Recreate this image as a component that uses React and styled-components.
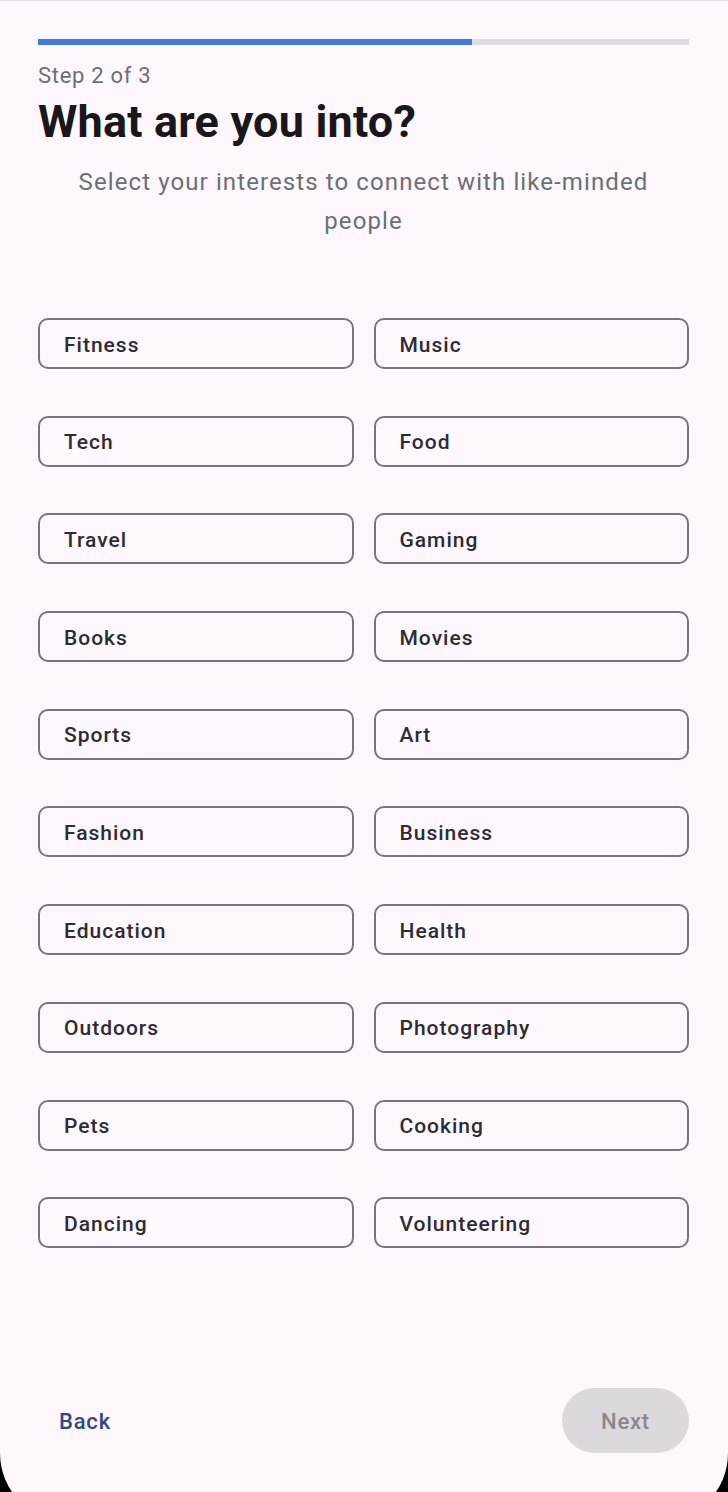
import React from "react";
import styled, { createGlobalStyle } from "styled-components";

const Global = createGlobalStyle`
  html, body { margin: 0; padding: 0; background: #000; overflow: hidden; }
  * { box-sizing: border-box; }
`;

const Screen = styled.div`
  width: 728px;
  height: 1522px;
  background: #fef7fd;
  border-radius: 69px;
  border-top: 1px solid #e3e1ea;
  border-top-left-radius: 0;
  border-top-right-radius: 0;
  overflow: hidden;
  display: flex;
  flex-direction: column;
  padding: 38px 39px 69px 38px;
  font-family: Roboto, "Noto Sans", sans-serif;
`;

const Track = styled.div`
  height: 6px;
  background: #dadbe4;
  display: flex;
`;

const Fill = styled.div`
  height: 100%;
  background: #3e7bdc;
`;

const Step = styled.div`
  margin-top: 18px;
  font-size: 22px;
  line-height: 26px;
  color: #687173;
  letter-spacing: 0.7px;
`;

const Title = styled.h1`
  margin: 6px 0 0;
  font-size: 45px;
  line-height: 54px;
  font-weight: 700;
  color: #18181c;
  letter-spacing: 0.2px;
`;

const Subtitle = styled.p`
  margin: 14px 0 0;
  font-size: 24px;
  line-height: 39px;
  color: #687173;
  text-align: center;
  padding: 0 10px;
  letter-spacing: 1.1px;
`;

const Grid = styled.div`
  margin-top: 77px;
  display: grid;
  grid-template-columns: 1fr 1fr;
  column-gap: 20px;
  row-gap: 46.7px;
`;

const Chip = styled.button`
  height: 51px;
  border: 2px solid #74757e;
  border-radius: 10px;
  background: transparent;
  display: flex;
  align-items: center;
  padding: 2px 0 0 24px;
  font-family: inherit;
  font-size: 21px;
  font-weight: 500;
  color: #2b2d33;
  text-align: left;
  letter-spacing: 1px;
`;

const Footer = styled.div`
  margin-top: auto;
  display: flex;
  justify-content: space-between;
  align-items: center;
`;

const TextButton = styled.button`
  height: 65px;
  padding: 2px 21px 0;
  border: none;
  background: transparent;
  font-family: inherit;
  font-size: 22px;
  font-weight: 500;
  color: #34478a;
  letter-spacing: 0.8px;
`;

const FilledButton = styled.button`
  height: 65px;
  width: 127px;
  padding-top: 2px;
  border: none;
  border-radius: 33px;
  background: #dcd8dd;
  font-family: inherit;
  font-size: 22px;
  font-weight: 500;
  color: #8a8790;
  letter-spacing: 0.8px;
`;

const interests = [
  "Fitness", "Music", "Tech", "Food", "Travel", "Gaming", "Books", "Movies",
  "Sports", "Art", "Fashion", "Business", "Education", "Health", "Outdoors",
  "Photography", "Pets", "Cooking", "Dancing", "Volunteering",
];

export default function App() {
  return (
    <>
      <Global />
      <Screen>
        <Track>
          <Fill style={{ width: `${(2 / 3) * 100}%` }} />
        </Track>
        <Step>Step 2 of 3</Step>
        <Title>What are you into?</Title>
        <Subtitle>Select your interests to connect with like-minded people</Subtitle>
        <Grid>
          {interests.map((i) => (
            <Chip key={i}>{i}</Chip>
          ))}
        </Grid>
        <Footer>
          <TextButton>Back</TextButton>
          <FilledButton>Next</FilledButton>
        </Footer>
      </Screen>
    </>
  );
}
